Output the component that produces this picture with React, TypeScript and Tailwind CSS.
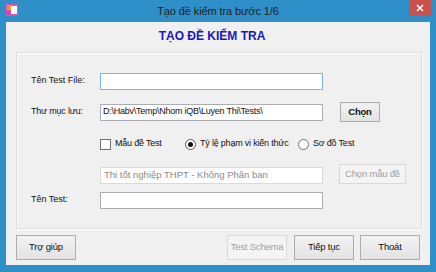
import React from "react";

const font = { fontFamily: "'Liberation Sans', Arial, sans-serif" };

function Btn({ children, w, disabled, bold }: { children: React.ReactNode; w: string; disabled?: boolean; bold?: boolean }) {
  return (
    <div
      className={`${w} flex items-center justify-center whitespace-nowrap border text-[9.5px] tracking-[-0.2px] ${
        disabled ? "border-[#d9d9d9] bg-[#f4f4f4] text-[#a0a0a0]" : "border-[#acacac] bg-gradient-to-b from-[#f2f2f2] to-[#e3e3e3] text-[#111]"
      } ${bold ? "font-bold" : ""}`}
    >
      {children}
    </div>
  );
}

export default function App() {
  return (
    <div className="w-[436px] h-[272px] bg-[#2e8fc9] flex flex-col overflow-hidden whitespace-nowrap" style={font}>
      {/* title bar */}
      <div className="h-[22px] grid grid-cols-[1fr_auto_1fr] items-start">
        <div className="pl-[6px] pt-[4px]">
          <svg width="12" height="12" viewBox="0 0 12 12">
            <rect x="0" y="0" width="12" height="12" fill="#e64fb0" />
            <rect x="1" y="1" width="4" height="5" fill="#f59a2c" />
            <rect x="5" y="2" width="6" height="8" fill="#fff" />
            <rect x="1" y="7" width="3" height="4" fill="#b54ad8" />
          </svg>
        </div>
        <div className="pt-[3px] text-[11px] leading-[16px] tracking-[-0.1px] text-[#222]">Tạo đề kiểm tra bước 1/6</div>
        <div className="flex justify-end pr-[5px]">
          <div className="w-[22px] h-[15px] bg-[#c9504d] flex items-center justify-center">
            <svg width="8" height="8" viewBox="0 0 8 8">
              <path d="M1 1 L7 7 M7 1 L1 7" stroke="#fff" strokeWidth="1.6" />
            </svg>
          </div>
        </div>
      </div>

      {/* client */}
      <div className="ml-[6px] mr-[6px] h-[243px] bg-[#f0f0f0] flex flex-col">
        <div className="h-[30px] flex items-center justify-center pr-[12px] pb-[2px] text-[12px] leading-[16px] font-bold text-[#1818c4]">
          TẠO ĐỀ KIỂM TRA
        </div>

        {/* group box */}
        <div className="ml-[10px] w-[406px] h-[177px] border border-[#dcdcdc] shadow-[inset_1px_1px_0_#fff,1px_1px_0_#fff] flex flex-col pt-[18px] text-[9px] text-[#111]">
          <div className="h-[20px] flex items-center">
            <div className="w-[83px] pl-[14px]">Tên Test File:</div>
            <div className="w-[223px] h-[17px] bg-white border border-[#7eb4ea]" />
          </div>

          <div className="h-[20px] mt-[11px] flex items-center">
            <div className="w-[83px] pl-[14px] tracking-[-0.2px]">Thư mục lưu:</div>
            <div className="w-[223px] h-[17px] bg-white border border-[#abadb3] flex items-center pl-[2px] text-[#111] tracking-[-0.25px] overflow-hidden">
              D:\Habv\Temp\Nhom iQB\Luyen Thi\Tests\
            </div>
            <div className="ml-[17px] h-[20px] flex">
              <Btn w="w-[40px]" bold>
                Chọn
              </Btn>
            </div>
          </div>

          <div className="h-[20px] mt-[12px] flex items-center tracking-[-0.2px]">
            <div className="w-[83px]" />
            <div className="w-[85px] flex items-center">
              <div className="w-[11px] h-[11px] bg-white border border-[#707070]" />
              <div className="ml-[4px]">Mẫu đề Test</div>
            </div>
            <div className="w-[113px] flex items-center">
              <div className="w-[11px] h-[11px] rounded-full bg-white border border-[#555] flex items-center justify-center">
                <div className="w-[5px] h-[5px] rounded-full bg-[#111]" />
              </div>
              <div className="ml-[4px]">Tỷ lệ phạm vi kiến thức</div>
            </div>
            <div className="flex items-center">
              <div className="w-[11px] h-[11px] rounded-full bg-white border border-[#707070]" />
              <div className="ml-[4px]">Sơ đồ Test</div>
            </div>
          </div>

          <div className="h-[20px] mt-[10px] flex items-center">
            <div className="w-[83px]" />
            <div className="w-[223px] h-[17px] mt-[2px] bg-white border border-[#d9d9d9] flex items-center pl-[3px] text-[#8a8a8a] text-[9.5px]">
              Thi tốt nghiệp THPT - Không Phân ban
            </div>
            <div className="ml-[16px] h-[20px] flex">
              <Btn w="w-[67px]" disabled>
                Chọn mẫu đề
              </Btn>
            </div>
          </div>

          <div className="h-[20px] mt-[6px] flex items-center">
            <div className="w-[83px] pl-[14px]">Tên Test:</div>
            <div className="w-[223px] h-[17px] bg-white border border-[#abadb3]" />
          </div>
        </div>

        {/* bottom buttons */}
        <div className="mt-[6px] h-[25px] flex pl-[10px]">
          <Btn w="w-[60px]">Trợ giúp</Btn>
          <div className="w-[151px]" />
          <Btn w="w-[60px]" disabled>
            Test Schema
          </Btn>
          <div className="w-[7px]" />
          <Btn w="w-[60px]">Tiếp tục</Btn>
          <div className="w-[6px]" />
          <Btn w="w-[60px]">Thoát</Btn>
        </div>
      </div>
    </div>
  );
}
